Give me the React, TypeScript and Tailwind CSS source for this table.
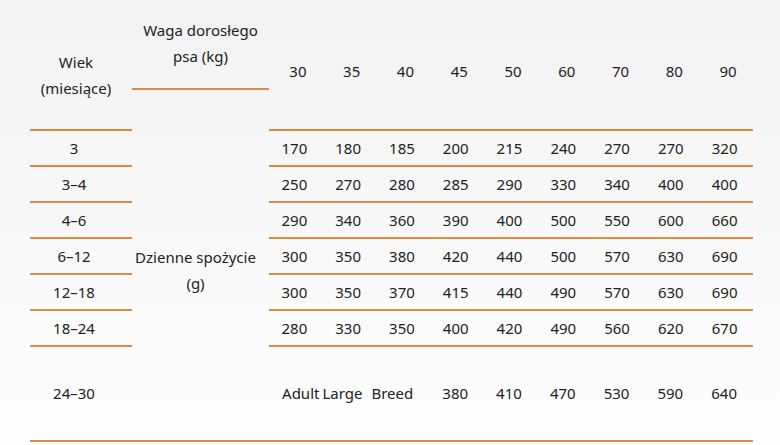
const weights = [30, 35, 40, 45, 50, 60, 70, 80, 90]

const rows: { age: string; values: number[] }[] = [
  { age: '3', values: [170, 180, 185, 200, 215, 240, 270, 270, 320] },
  { age: '3–4', values: [250, 270, 280, 285, 290, 330, 340, 400, 400] },
  { age: '4–6', values: [290, 340, 360, 390, 400, 500, 550, 600, 660] },
  { age: '6–12', values: [300, 350, 380, 420, 440, 500, 570, 630, 690] },
  { age: '12–18', values: [300, 350, 370, 415, 440, 490, 570, 630, 690] },
  { age: '18–24', values: [280, 330, 350, 400, 420, 490, 560, 620, 670] },
]

const adultValues = [380, 410, 470, 530, 590, 640]

export default function App() {
  return (
    <div className="h-[445px] w-full overflow-hidden bg-gradient-to-b from-[#f2f2f2] to-[#fefefe] pl-[30px] font-['Noto_Sans',sans-serif] text-[15px] text-[#222]">
      <div className="flex w-[723px]">
        {/* age column */}
        <div className="flex w-[102px] flex-col">
          <div className="h-[131px] border-b-2 border-[#df8b3f] pr-[10px] pt-[49px] text-center leading-[26px]">
            Wiek
            <br />
            (miesiące)
          </div>
          {rows.map(r => (
            <div
              key={r.age}
              className="flex h-[36px] items-center justify-center border-b-2 border-[#df8b3f] pr-[14px]"
            >
              {r.age}
            </div>
          ))}
          <div className="flex h-[95px] items-center justify-center border-b-2 border-[#df8b3f] pr-[14px]">
            24–30
          </div>
        </div>

        {/* label column */}
        <div className="flex w-[137px] flex-col">
          <div className="h-[90px] border-b-2 border-[#df8b3f] pt-[17px] text-center leading-[26px]">
            Waga dorosłego
            <br />
            psa (kg)
          </div>
          <div className="h-[257px] pr-[10px] pt-[154px] text-center leading-[26px]">
            Dzienne spożycie
            <br />
            (g)
          </div>
          <div className="h-[95px] border-b-2 border-[#df8b3f]" />
        </div>

        {/* values */}
        <div className="flex flex-1 flex-col">
          <div className="grid h-[131px] grid-cols-9 border-b-2 border-[#df8b3f]">
            {weights.map(w => (
              <div key={w} className="pl-[4px] pt-[58px] text-center leading-[26px]">
                {w}
              </div>
            ))}
          </div>
          {rows.map(r => (
            <div key={r.age} className="grid h-[36px] grid-cols-9 border-b-2 border-[#df8b3f]">
              {r.values.map((v, i) => (
                <div key={i} className="flex items-center justify-center pr-[3px]">
                  {v}
                </div>
              ))}
            </div>
          ))}
          <div className="grid h-[95px] grid-cols-9 border-b-2 border-[#df8b3f]">
            <div className="col-span-3 flex items-center justify-center pr-[4px]">
              <span className="mr-[3px]">Adult</span>
              <span className="mr-[9px]">Large</span>
              <span>Breed</span>
            </div>
            {adultValues.map((v, i) => (
              <div key={i} className="flex items-center justify-center pr-[4px]">
                {v}
              </div>
            ))}
          </div>
        </div>
      </div>
    </div>
  )
}
